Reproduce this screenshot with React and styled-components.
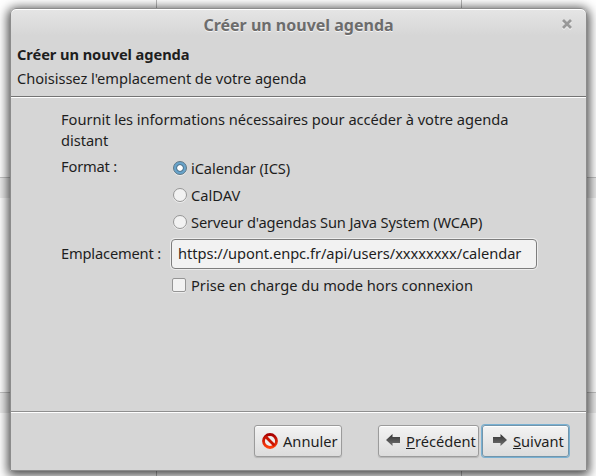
import React from "react";
import styled, { createGlobalStyle } from "styled-components";

const Global = createGlobalStyle`
  * { box-sizing: border-box; }
  html, body { margin: 0; padding: 0; overflow: hidden; }
  body { font-family: "Noto Sans", sans-serif; font-size: 14.67px; color: #1e1e1e; }
`;

const Desktop = styled.div`
  width: 596px;
  height: 476px;
  padding: 8px 9px 5px 10px;
  overflow: hidden;
  background:
    linear-gradient(#b8b8b8, #b8b8b8) 156px 0 / 1px 100% no-repeat,
    linear-gradient(#b8b8b8, #b8b8b8) 461px 0 / 1px 100% no-repeat,
    linear-gradient(#c4c4c4, #c4c4c4) 0 177px / 100% 1px no-repeat,
    linear-gradient(#c4c4c4, #c4c4c4) 0 392px / 100% 1px no-repeat,
    linear-gradient(#ececec, #ececec) 0 178px / 100% 20px no-repeat,
    linear-gradient(#ececec, #ececec) 0 393px / 100% 20px no-repeat,
    #fff;
`;

const Window = styled.section`
  display: flex;
  flex-direction: column;
  width: 577px;
  height: 463px;
  border: 1px solid #8c8c8c;
  border-radius: 6px 6px 0 0;
  background: linear-gradient(#e5e5e5, #d6d6d6 27px);
  box-shadow: inset 0 1px #fff, 0 2px 11px 2px rgba(0, 0, 0, 0.75);
`;

const TitleBar = styled.header`
  display: grid;
  grid-template-columns: 40px 1fr 40px;
  align-items: center;
  height: 32px;
  flex: none;
`;

const Title = styled.h1`
  grid-column: 2;
  margin: 0;
  text-align: center;
  font-size: 16px;
  line-height: 22px;
  color: #6c6c6c;
  text-shadow: 0 1px #f4f4f4;
`;

const CloseButton = styled.button`
  display: flex;
  justify-content: center;
  padding: 0 0 1px 2px;
  border: 0;
  background: none;
`;

const Intro = styled.div`
  height: 56px;
  flex: none;
  padding: 1px 6px 0;
  border-bottom: 1px solid #747474;
  line-height: 24px;
  letter-spacing: -0.055px;
`;

const Heading = styled.h2`
  margin: 0;
  font-size: 14.67px;
  line-height: 24px;
  letter-spacing: -0.08px;
`;

const Text = styled.p`
  margin: 0;
`;

const Body = styled.main`
  flex: 1;
  padding: 11px 48px 0 50px;
  border-top: 1px solid #fff;
`;

const Description = styled.p`
  width: 470px;
  margin: 0;
  line-height: 21px;
  letter-spacing: -0.045px;
`;

const Form = styled.div`
  display: grid;
  grid-template-columns: 110px 1fr;
  margin-top: 4px;
`;

const Label = styled.label`
  padding-top: ${(p) => p.$top}px;
  line-height: 20px;
  letter-spacing: -0.17px;
  white-space: nowrap;
`;

const RadioGroup = styled.div`
  display: flex;
  flex-direction: column;
  height: 85px;
  margin-top: -1px;
  padding-left: 2px;
`;

const Option = styled.div`
  display: flex;
  align-items: center;
  gap: 4px;
  height: 27px;
  flex: none;
  letter-spacing: ${(p) => p.$track || 0}px;
`;

const RadioDot = styled.span`
  width: 14px;
  height: 14px;
  border-radius: 50%;
  border: 1px solid ${(p) => (p.$on ? "#5d7686" : "#959595")};
  background: ${(p) =>
    p.$on ? "radial-gradient(circle, #fff 2.4px, #4d7088 3.2px, #68a4cb 4.4px)" : "#f2f2f2"};
  box-shadow: 0 1px #ececec;
`;

const CheckBox = styled.span`
  width: 14px;
  height: 14px;
  border: 1px solid #959595;
  border-radius: 2px;
  background: #f2f2f2;
  box-shadow: 0 1px #ececec;
`;

const Field = styled.input`
  width: 366px;
  height: 30px;
  padding: 0 6px 2px;
  border: 1px solid #7d7d7d;
  border-radius: 4px;
  background: #f2f2f2;
  box-shadow: 0 0 0 1px #ededed;
  font: inherit;
  letter-spacing: -0.055px;
  color: inherit;
`;

const OfflineRow = styled(Option)`
  grid-column: 2;
  padding-left: 1px;
  gap: 5px;
  margin-top: 2px;
`;

const Actions = styled.footer`
  display: flex;
  height: 58px;
  flex: none;
  padding: 12px 16px 0 243px;
  border-top: 1px solid #fff;
  box-shadow: 0 -1px #8f8f8f;
`;

const Button = styled.button`
  display: flex;
  align-items: center;
  gap: ${(p) => p.$space || 5}px;
  width: ${(p) => p.$width}px;
  height: 32px;
  flex: none;
  margin-left: ${(p) => p.$gap || 0}px;
  padding: 0 0 0 ${(p) => p.$inset || 7}px;
  border: 1px solid ${(p) => (p.$primary ? "#7295ab" : "#9b9b9b")};
  border-radius: 3px;
  background: linear-gradient(#f3f3f3, #dcdcdc);
  box-shadow: ${(p) =>
    p.$primary ? "0 0 0 1px #79b1d3, inset 0 1px #fff" : "inset 0 1px #fff, 0 1px 1px #b5b5b5"};
  font: inherit;
  color: inherit;
  white-space: nowrap;
`;

const ArrowSlot = styled.span`
  display: flex;
  padding-bottom: 3px;
`;

const Mnemonic = styled.span`
  text-decoration: underline;
  text-decoration-thickness: 1px;
  text-underline-offset: 1px;
`;

function CloseIcon() {
  return (
    <svg width="12" height="13" viewBox="0 0 12 13">
      <path d="M2 3l8 8M10 3l-8 8" stroke="#f5f5f5" strokeWidth="2.8" />
      <path d="M2 2l8 8M10 2l-8 8" stroke="#999" strokeWidth="2.8" />
    </svg>
  );
}

function ForbiddenIcon() {
  return (
    <svg width="16" height="16" viewBox="0 0 16 16">
      <defs>
        <linearGradient id="red" x1="0" y1="0" x2="0" y2="1">
          <stop offset="0" stopColor="#a80000" />
          <stop offset="1" stopColor="#ff3f0c" />
        </linearGradient>
      </defs>
      <circle cx="8" cy="8" r="6.5" fill="#eee" stroke="url(#red)" strokeWidth="2.8" />
      <path d="M3.5 3.5l9 9" stroke="#c91400" strokeWidth="2.8" />
    </svg>
  );
}

function ArrowIcon({ right }) {
  return (
    <svg width="14" height="12" viewBox="0 0 14 12">
      <defs>
        <linearGradient id="arrow" x1="0" y1="0" x2="0" y2="1">
          <stop offset="0" stopColor="#303030" />
          <stop offset="1" stopColor="#747474" />
        </linearGradient>
      </defs>
      <path
        d={right ? "M14 6L7.5 0v3H0v6h7.5v3z" : "M0 6l6.5-6v3H14v6H6.5v3z"}
        fill="url(#arrow)"
      />
    </svg>
  );
}

const formats = [
  { name: "iCalendar (ICS)", on: true, track: -0.1 },
  { name: "CalDAV", track: 0 },
  { name: "Serveur d'agendas Sun Java System (WCAP)", track: -0.13 },
];

export default function App() {
  return (
    <>
      <Global />
      <Desktop>
        <Window>
          <TitleBar>
            <Title>Créer un nouvel agenda</Title>
            <CloseButton aria-label="Fermer"><CloseIcon /></CloseButton>
          </TitleBar>
          <Intro>
            <Heading>Créer un nouvel agenda</Heading>
            <Text>Choisissez l'emplacement de votre agenda</Text>
          </Intro>
          <Body>
            <Description>
              Fournit les informations nécessaires pour accéder à votre agenda distant
            </Description>
            <Form>
              <Label $top={1}>Format :</Label>
              <RadioGroup>
                {formats.map((f) => (
                  <Option key={f.name} $track={f.track}>
                    <RadioDot $on={f.on} />
                    {f.name}
                  </Option>
                ))}
              </RadioGroup>
              <Label $top={4}>Emplacement :</Label>
              <Field readOnly value="https://upont.enpc.fr/api/users/xxxxxxxx/calendar" />
              <OfflineRow>
                <CheckBox />
                Prise en charge du mode hors connexion
              </OfflineRow>
            </Form>
          </Body>
          <Actions>
            <Button $width={88}>
              <ForbiddenIcon />
              <span>Annuler</span>
            </Button>
            <Button $width={101} $gap={36} $space={6}>
              <ArrowSlot><ArrowIcon /></ArrowSlot>
              <span><Mnemonic>P</Mnemonic>récédent</span>
            </Button>
            <Button $width={87} $gap={3} $inset={10} $space={6} $primary>
              <ArrowSlot><ArrowIcon right /></ArrowSlot>
              <span><Mnemonic>S</Mnemonic>uivant</span>
            </Button>
          </Actions>
        </Window>
      </Desktop>
    </>
  );
}
